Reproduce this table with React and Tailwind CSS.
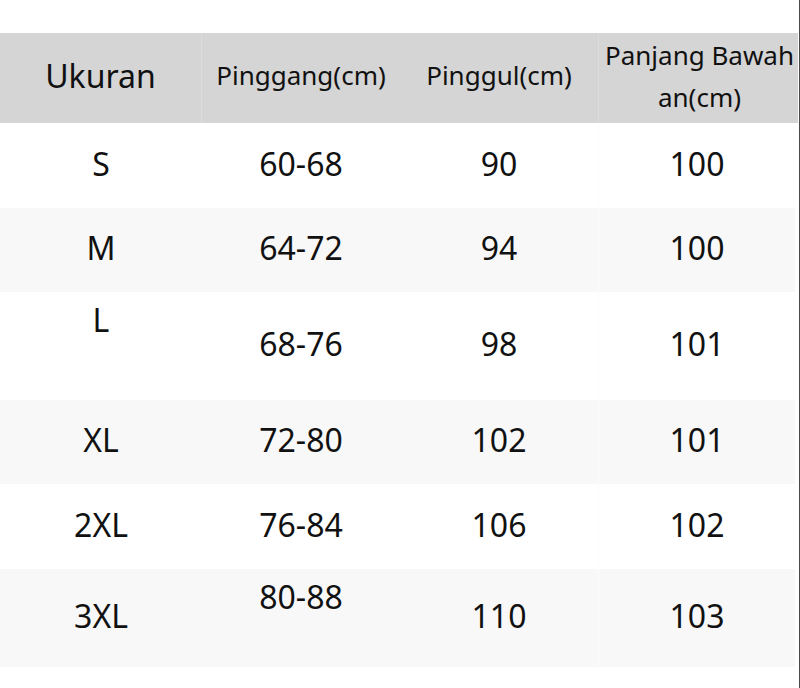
const rows = [
  { size: "S", waist: "60-68", hip: "90", length: "100", h: "h-[85px]", bg: "bg-white" },
  { size: "M", waist: "64-72", hip: "94", length: "100", h: "h-[84px]", bg: "bg-[#f8f8f8]" },
  { size: "L", waist: "68-76", hip: "98", length: "101", h: "h-[108px]", bg: "bg-white", sizeTop: true },
  { size: "XL", waist: "72-80", hip: "102", length: "101", h: "h-[84px]", bg: "bg-[#f8f8f8]" },
  { size: "2XL", waist: "76-84", hip: "106", length: "102", h: "h-[85px]", bg: "bg-white" },
  { size: "3XL", waist: "80-88", hip: "110", length: "103", h: "h-[98px]", bg: "bg-[#f8f8f8]", waistTop: true },
];

function Cell({ children, top, className = "" }) {
  return (
    <div
      className={
        "flex justify-center " +
        (top ? "items-start pt-[4px] " : "items-center pb-[4px] ") +
        className
      }
    >
      {children}
    </div>
  );
}

export default function App() {
  return (
    <div
      className="w-[800px] h-[688px] bg-white text-[#111] border-r border-[#4a4a4a] pt-[33px]"
      style={{ fontFamily: '"Noto Sans", "Open Sans", sans-serif' }}
    >
      <div className="grid grid-cols-[202px_198px_199px_199px] h-[90px] w-[798px] bg-[#d5d5d5]">
        <div className="flex items-center justify-center pb-[4px] text-[32px] border-r border-[#dcdcdc]">
          Ukuran
        </div>
        <div className="flex items-center justify-center pb-[6px] text-[26px]">
          Pinggang(cm)
        </div>
        <div className="flex items-center justify-center pb-[6px] text-[26px] border-r border-[#dcdcdc]">
          Pinggul(cm)
        </div>
        <div className="flex items-center justify-center pb-[4px] pl-[2px] text-[26px] leading-[42px] text-center">
          Panjang Bawah an(cm)
        </div>
      </div>

      <div className="w-[795px]">
        {rows.map((r) => (
          <div
            key={r.size}
            className={"grid grid-cols-[202px_198px_199px_196px] text-[32px] " + r.h + " " + r.bg}
          >
            <Cell top={r.sizeTop}>{r.size}</Cell>
            <Cell top={r.waistTop}>{r.waist}</Cell>
            <Cell className="border-r border-[#fcfcfc]">{r.hip}</Cell>
            <Cell>{r.length}</Cell>
          </div>
        ))}
      </div>
    </div>
  );
}
